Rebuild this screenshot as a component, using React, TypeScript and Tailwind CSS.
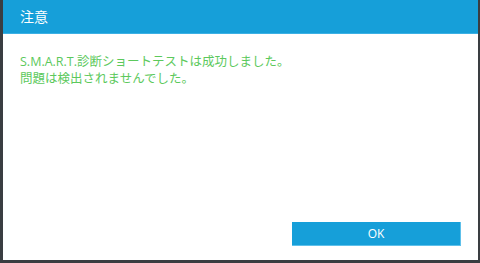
export default function App() {
  const font = { fontFamily: '"Open Sans", "Noto Sans CJK JP", sans-serif' };
  return (
    <div className="w-[480px] h-[263px] bg-[#3a3d41] pl-[3px] pr-[2px] pb-[3px]" style={font}>
      <div className="w-full h-full bg-white flex flex-col">
        <div className="h-[34px] bg-[#169fd9] border-b border-[#3cb0e4] flex items-center pl-[17px] text-white text-[14px] leading-none">
          注意
        </div>
        <div className="flex-1 pl-[17px] pt-[19px] text-[#5cc95c] text-[12.5px] leading-[17px]">
          <div>S.M.A.R.T.診断ショートテストは成功しました。</div>
          <div>問題は検出されませんでした。</div>
        </div>
        <div className="flex justify-end pr-[17px] pb-[14px]">
          <button className="w-[169px] h-[24px] bg-[#169fd9] border-r border-b border-[#5ec0ea] text-white text-[12px] leading-none flex items-center justify-center">
            OK
          </button>
        </div>
      </div>
    </div>
  );
}
